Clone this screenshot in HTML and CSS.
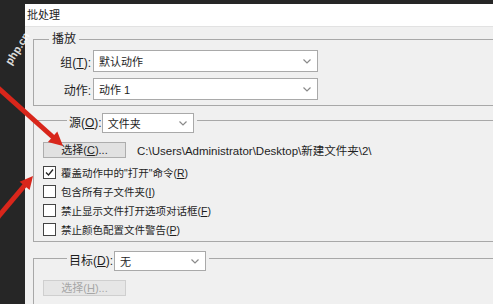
FILE: index.html
```html
<!DOCTYPE html>
<html lang="zh-CN">
<head>
    <meta charset="UTF-8">
    <meta name="viewport" content="width=device-width, initial-scale=1.0">
    <title>批处理</title>
    <link rel="stylesheet" href="styles.css">
</head>
<body>
    <div class="window">
        <div class="titlebar">批处理</div>

        <fieldset class="group play">
            <legend class="caption">播放</legend>
            <div class="form-grid">
                <label>组<span class="key">(<u>T</u>):</span></label>
                <div class="select wide"><span>默认动作</span><svg class="chevron" viewBox="0 0 8 5"><path d="M0.5 0.5 L4 4 L7.5 0.5"/></svg></div>
                <label>动作<span class="key">:</span></label>
                <div class="select wide"><span>动作 1</span><svg class="chevron" viewBox="0 0 8 5"><path d="M0.5 0.5 L4 4 L7.5 0.5"/></svg></div>
            </div>
        </fieldset>

        <fieldset class="group source">
            <legend class="picker">
                <label>源<span class="key">(<u>O</u>):</span></label>
                <div class="select narrow"><span>文件夹</span><svg class="chevron" viewBox="0 0 8 5"><path d="M0.5 0.5 L4 4 L7.5 0.5"/></svg></div>
            </legend>
            <div class="path-row">
                <button class="btn">选择<span class="key">(<u>C</u>)...</span></button>
                <span class="path">C:\Users\Administrator\Desktop\新建文件夹\2\</span>
            </div>
            <div class="checks">
                <div class="check"><span class="box"><svg viewBox="0 0 11 11"><path d="M2 5.5 L4.5 8 L9 2.5"/></svg></span><span>覆盖动作中的<span class="key">"</span>打开<span class="key">"</span>命令<span class="key">(<u>R</u>)</span></span></div>
                <div class="check"><span class="box"></span><span>包含所有子文件夹<span class="key">(<u>I</u>)</span></span></div>
                <div class="check"><span class="box"></span><span>禁止显示文件打开选项对话框<span class="key">(<u>F</u>)</span></span></div>
                <div class="check"><span class="box"></span><span>禁止颜色配置文件警告<span class="key">(<u>P</u>)</span></span></div>
            </div>
        </fieldset>

        <fieldset class="group target">
            <legend class="picker">
                <label>目标<span class="key">(<u>D</u>):</span></label>
                <div class="select narrow"><span>无</span><svg class="chevron" viewBox="0 0 8 5"><path d="M0.5 0.5 L4 4 L7.5 0.5"/></svg></div>
            </legend>
            <button class="btn" disabled>选择<span class="key">(<u>H</u>)...</span></button>
        </fieldset>
    </div>

    <!-- overlays: watermark + red arrows from the screenshot -->
    <div class="watermark">php.cn</div>
    <svg class="arrows" viewBox="0 0 493 304">
        <line x1="-4" y1="86" x2="54" y2="138"/>
        <polygon points="63,146 47.9,141.9 57.3,131.5"/>
        <line x1="-8" y1="224" x2="25" y2="185"/>
        <polygon points="33,176 29.6,190.1 19.6,181.7"/>
    </svg>
</body>
</html>
```

FILE: styles.css
```css
body {
    margin: 0;
    height: 304px;
    overflow: hidden;
    position: relative;
    background: #262626;
    font-family: "Liberation Sans", "Noto Sans CJK SC", sans-serif;
    font-size: 12px;
    color: #1e1e1e;
}
.key {
    font-family: "Liberation Sans", sans-serif;
}
.window {
    margin: 4px 0 0 25px;
    width: 520px;
    height: 300px;
    background: #f0f0f0;
}
.titlebar {
    height: 22px;
    line-height: 22px;
    padding-left: 2px;
    font-size: 11px;
    background: #fff;
    border-bottom: 1px solid #e2e2e2;
}
.group {
    margin: 0 0 0 8px;
    border: 1px solid #a8a8a8;
    min-width: 0;
}
.play {
    margin-top: 5px;
    padding: 4px 0 5px 7px;
}
.caption {
    margin-left: 8px;
    padding: 0 3px;
    line-height: 14px;
}
.form-grid {
    display: grid;
    grid-template-columns: 50px 225px;
    column-gap: 2px;
    row-gap: 6px;
    align-items: center;
}
.form-grid label {
    text-align: right;
}
.select {
    box-sizing: border-box;
    height: 22px;
    padding: 0 6px 0 5px;
    display: flex;
    align-items: center;
    justify-content: space-between;
    font-size: 11px;
    background: #fff;
    border: 1px solid #a9a9a9;
}
.narrow {
    height: 20px;
    width: 92px;
}
.chevron {
    width: 8px;
    height: 5px;
    fill: none;
    stroke: #8a8a8a;
    stroke-width: 1.2;
}
.source {
    margin-top: 7px;
    padding: 14px 0 2px 9px;
}
.target {
    margin-top: 9px;
    padding: 14px 0 10px 9px;
}
.picker {
    height: 15px;
    margin-left: 24px;
    padding: 0 3px 0 2px;
    display: flex;
    align-items: flex-start;
    gap: 0;
}
.picker label {
    line-height: 20px;
}
.target .picker {
    gap: 1px;
}
.path-row {
    display: flex;
    align-items: center;
    gap: 11px;
}
.btn {
    box-sizing: border-box;
    width: 83px;
    height: 16px;
    padding: 0;
    font: inherit;
    font-size: 11px;
    line-height: 14px;
    color: #1e1e1e;
    background: #e1e1e1;
    border: 1px solid #adadad;
}
.btn:disabled {
    color: #a6a6a6;
    background: #e6e6e6;
    border-color: #cfcfcf;
}
.path {
    font-size: 11.5px;
}
.checks {
    margin-top: 5px;
    font-size: 10.5px;
}
.check {
    height: 19px;
    display: flex;
    align-items: center;
    gap: 5px;
}
.box {
    box-sizing: border-box;
    width: 13px;
    height: 13px;
    background: #fff;
    border: 1px solid #444;
}
.box svg {
    display: block;
    width: 11px;
    height: 11px;
    fill: none;
    stroke: #222;
    stroke-width: 1.3;
}
.watermark {
    position: absolute;
    left: 0;
    top: 42px;
    transform: rotate(-58deg);
    transform-origin: 18px 7px;
    color: rgba(255, 255, 255, 0.85);
    font-size: 11px;
    font-weight: bold;
}
.arrows {
    position: absolute;
    left: 0;
    top: 0;
    width: 493px;
    height: 304px;
    pointer-events: none;
}
.arrows line {
    stroke: #d8261b;
    stroke-width: 5;
}
.arrows polygon {
    fill: #d8261b;
}
```
